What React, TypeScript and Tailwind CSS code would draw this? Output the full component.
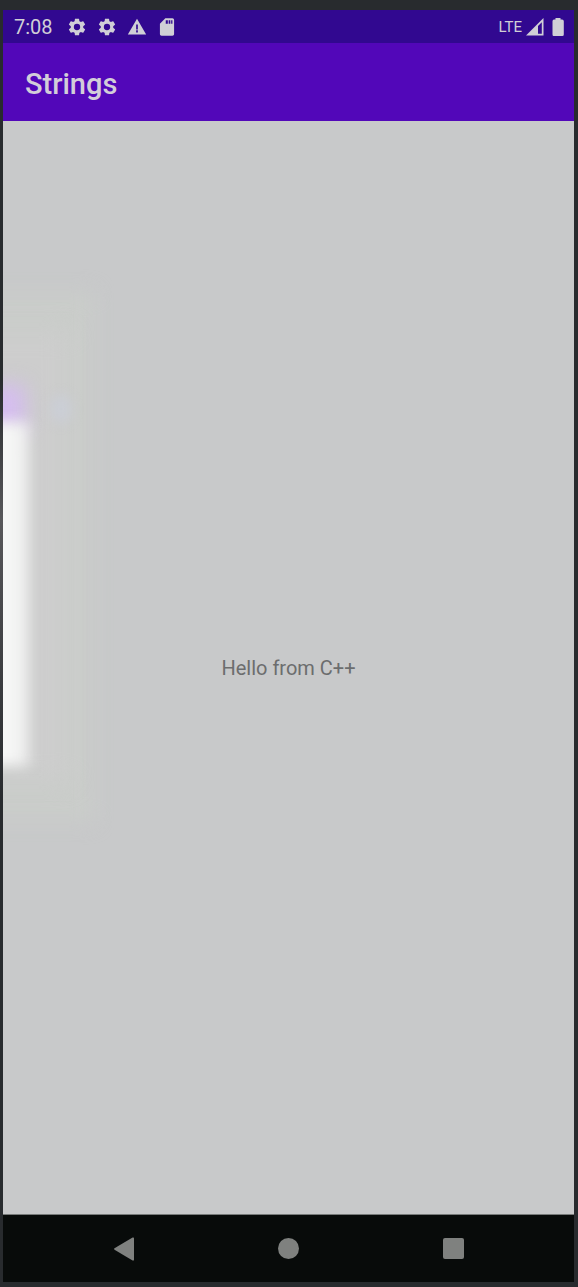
function GearIcon() {
  return (
    <svg viewBox="0 0 24 24" className="size-5" fill="currentColor" aria-hidden="true">
      <path
        fillRule="evenodd"
        d="M19.43 12.98c.04-.32.07-.64.07-.98s-.03-.66-.07-.98l2.11-1.65c.19-.15.24-.42.12-.64l-2-3.46c-.12-.22-.39-.3-.61-.22l-2.49 1c-.52-.4-1.08-.73-1.69-.98l-.38-2.65A.49.49 0 0 0 14 2h-4c-.25 0-.46.18-.49.42l-.38 2.65c-.61.25-1.17.59-1.69.98l-2.49-1c-.23-.09-.49 0-.61.22l-2 3.46c-.13.22-.07.49.12.64l2.11 1.65c-.04.32-.07.65-.07.98s.03.66.07.98l-2.11 1.65c-.19.15-.24.42-.12.64l2 3.46c.12.22.39.3.61.22l2.49-1c.52.4 1.08.73 1.69.98l.38 2.65c.03.24.24.42.49.42h4c.25 0 .46-.18.49-.42l.38-2.65c.61-.25 1.17-.59 1.69-.98l2.49 1c.23.09.49 0 .61-.22l2-3.46c.12-.22.07-.49-.12-.64l-2.11-1.65zM12 15.8a3.8 3.8 0 1 1 0-7.6 3.8 3.8 0 0 1 0 7.6z"
      />
    </svg>
  );
}

function WarningIcon() {
  return (
    <svg viewBox="0 0 24 24" className="size-5" fill="currentColor" aria-hidden="true">
      <path fillRule="evenodd" d="M1 21h22L12 2 1 21zM13 18.500h-2v-2.500h2v2.500zm0-3.500h-2V9h2v6z" />
    </svg>
  );
}

function SdCardIcon() {
  return (
    <svg viewBox="0 0 24 24" className="size-5" fill="currentColor" aria-hidden="true">
      <path
        fillRule="evenodd"
        d="M18.500 1.500H10L3.500 8v12.500c0 1.100.9 2 2 2h13c1.100 0 2-.9 2-2v-17c0-1.100-.9-2-2-2zM13 8h-2.500V4H13v4zm3 0h-2V4h2v4zm2.500 0H17V4h1.500v4z"
      />
    </svg>
  );
}

function SignalIcon() {
  return (
    <svg viewBox="0 0 18 18" className="size-[18px]" aria-hidden="true">
      <path d="M0 17.500 17.500 0v17.500z M12 8v7.800h3.800V4.200z" fill="currentColor" fillRule="evenodd" />
    </svg>
  );
}

function BatteryIcon() {
  return (
    <svg viewBox="0 0 12 18" className="h-[18px] w-3" fill="currentColor" aria-hidden="true">
      <path d="M3.500 0h5v1.500h1.500Q11.800 1.500 11.800 3.200v13.300q0 1.500-1.500 1.500h-8.600Q.5 18 .5 16.500V3.200Q.5 1.500 2 1.500h1.500z" />
    </svg>
  );
}

function StatusBar() {
  return (
    <div className="flex h-[33px] items-center justify-between bg-[#310890] px-[10px] text-[#d0cfd6]">
      <div className="flex items-center gap-[10px]">
        <span className="pr-1 pl-px text-xl leading-6">7:08</span>
        <GearIcon />
        <GearIcon />
        <WarningIcon />
        <SdCardIcon />
      </div>
      <div className="flex items-center">
        <span className="pr-1 text-[15px] leading-6">LTE</span>
        <SignalIcon />
        <span className="w-2" />
        <BatteryIcon />
      </div>
    </div>
  );
}

function Reflection() {
  return (
    <div aria-hidden="true" className="pointer-events-none absolute inset-0 overflow-hidden">
      <div className="absolute top-[172px] -left-10 h-[528px] w-[130px] bg-[#cacdca] blur-[10px]" />
      <div className="absolute top-[210px] -left-10 h-[450px] w-[105px] bg-[#cdcdcd] blur-[12px]" />
      <div className="absolute top-[274px] left-12 h-7 w-5 rounded-full bg-[#cbced6] blur-[6px]" />
      <div className="absolute top-[264px] -left-10 h-12 w-[62px] bg-[#d5bdf0] blur-[10px]" />
      <div className="absolute top-[301px] -left-10 h-[344px] w-[66px] bg-linear-to-r from-[#f8f9f8] from-60% to-[#ededed] blur-[7px]" />
    </div>
  );
}

function NavigationBar() {
  return (
    <nav className="grid h-[67px] grid-cols-[1fr_88px_1fr] items-center bg-[#080b0a] text-[#7f817f]">
      <button type="button" aria-label="Back" className="flex h-full items-center justify-center">
        <svg viewBox="0 0 20 24" className="h-6 w-5" fill="currentColor" aria-hidden="true">
          <path d="M0.500 11.300 18.600.6q1.400-.6 1.400.7v21.400q0 1.300-1.400.7L.5 12.700q-.8-.7 0-1.400z" />
        </svg>
      </button>
      <button type="button" aria-label="Home" className="flex h-full items-center justify-center">
        <span className="size-[21px] rounded-full bg-current" />
      </button>
      <button type="button" aria-label="Recent apps" className="flex h-full items-center justify-center">
        <span className="size-[21px] rounded-xs bg-current" />
      </button>
    </nav>
  );
}

export default function App() {
  return (
    <div className="flex min-h-screen flex-col bg-[#282b2e] pt-[10px] pr-1 pb-[5px] font-['Roboto',sans-serif]">
      <div className="flex flex-1 bg-linear-to-b from-[#282b2e] from-29% via-[#58585b] via-40% to-[#282b2e] to-62% pl-[3px]">
        <div className="flex flex-1 flex-col">
          <StatusBar />
          <header className="flex h-[78px] items-center bg-[#5207b9] px-[22px] pt-1">
            <h1 className="text-[29px] leading-8 font-medium text-[#d3cdd9]">Strings</h1>
          </header>
          <main className="relative flex flex-1 items-center justify-center border-b border-[#777a79] bg-[#c8c9ca]">
            <Reflection />
            <p className="relative text-xl leading-6 text-[#6c6d6e]">Hello from C++</p>
          </main>
          <NavigationBar />
        </div>
      </div>
    </div>
  );
}
